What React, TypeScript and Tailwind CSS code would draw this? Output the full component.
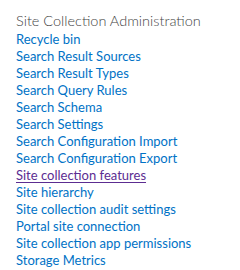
const links = [
  "Recycle bin",
  "Search Result Sources",
  "Search Result Types",
  "Search Query Rules",
  "Search Schema",
  "Search Settings",
  "Search Configuration Import",
  "Search Configuration Export",
  "Site collection features",
  "Site hierarchy",
  "Site collection audit settings",
  "Portal site connection",
  "Site collection app permissions",
  "Storage Metrics",
];

const App = () => {
  return (
    <div className="w-[240px] h-[270px] bg-white pl-4 pt-[11px] font-['Lato',sans-serif]">
      <h2 className="text-[14.5px] leading-[20px] font-light text-[#444444]">Site Collection Administration</h2>
      <ul className="flex flex-col">
        {links.map((l) =>
          l === "Site collection features" ? (
            <li key={l} className="text-[13px] leading-[17px] text-[#5c2d91] underline underline-offset-2">
              {l}
            </li>
          ) : (
            <li key={l} className="text-[13px] leading-[17px] text-[#0072c6]">
              {l}
            </li>
          )
        )}
      </ul>
    </div>
  );
};

export default App;
